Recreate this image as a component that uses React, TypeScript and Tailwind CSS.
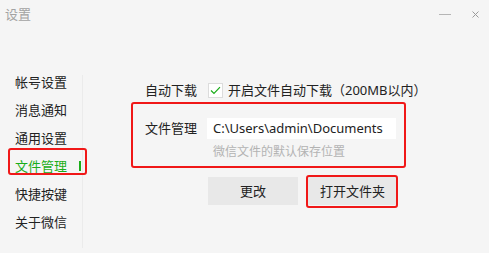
const FONT = { fontFamily: '"Noto Sans", "Noto Sans CJK SC", sans-serif' };

const MENU = ["帐号设置", "消息通知", "通用设置", "文件管理", "快捷按键", "关于微信"];
const ACTIVE = "文件管理";

function Sidebar() {
  return (
    <div className="w-[83px] shrink-0 mt-[47px] h-[173px] border-r border-[#ebebeb]">
      <ul className="-mt-[7px]">
        {MENU.map((m) => (
          <li
            key={m}
            className={
              "relative h-[28px] pl-[15px] flex items-center text-[13px] leading-none " +
              (m === ACTIVE ? "text-[#1aad19]" : "text-[#222]")
            }
          >
            {m}
            {m === ACTIVE ? (
              <span className="absolute right-[1px] top-[9px] w-[2px] h-[10px] bg-[#1aad19]" />
            ) : null}
          </li>
        ))}
      </ul>
    </div>
  );
}

function Checkbox() {
  return (
    <span className="w-[15px] h-[15px] border border-[#dcdcdc] bg-white flex items-center justify-center">
      <svg width="11" height="9" viewBox="0 0 11 9" fill="none">
        <path d="M1 4.5 L4 7.5 L10 1.2" stroke="#1aad19" strokeWidth="1.2" />
      </svg>
    </span>
  );
}

export default function App() {
  return (
    <div
      className="relative w-[489px] h-[253px] bg-[#f5f5f5] overflow-hidden text-[#222]"
      style={FONT}
    >
      {/* title bar */}
      <div className="h-[28px] flex items-center justify-between pl-[5px] pr-[10px]">
        <span className="text-[13px] leading-none text-[#a3a3a3]">设置</span>
        <div className="flex items-center gap-[21px]">
          <span className="w-[12px] h-[1px] bg-[#b5b5b5]" />
          <svg width="7" height="7" viewBox="0 0 7 7">
            <path d="M0.5 0.5 L6.5 6.5 M6.5 0.5 L0.5 6.5" stroke="#9a9a9a" strokeWidth="1" />
          </svg>
        </div>
      </div>

      <div className="flex">
        <Sidebar />

        <div className="pl-[62px] pt-[54px] flex flex-col">
          <div className="flex items-center h-[16px]">
            <span className="w-[62px] text-[13px] leading-none">自动下载</span>
            <div className="ml-[1px] flex items-center gap-[5px]">
              <Checkbox />
              <span className="text-[13px] leading-none">开启文件自动下载（200MB以内）</span>
            </div>
          </div>

          <div className="mt-[20px] flex items-center">
            <span className="w-[62px] text-[13px] leading-none">文件管理</span>
            <div className="w-[189px] h-[21px] bg-white pl-[6px] flex items-center text-[13px] leading-none">
              C:\Users\admin\Documents
            </div>
          </div>

          <div className="mt-[5px] ml-[68px] h-[16px] flex items-center text-[12px] leading-none text-[#b3b3b3]">
            微信文件的默认保存位置
          </div>

          <div className="mt-[17px] ml-[63px] flex gap-[10px]">
            <button className="w-[90px] h-[28px] bg-[#e8e8e8] text-[13px] leading-none text-[#222]">
              更改
            </button>
            <button className="w-[89px] h-[28px] bg-[#e8e8e8] text-[13px] leading-none text-[#222]">
              打开文件夹
            </button>
          </div>
        </div>
      </div>

      {/* annotation boxes */}
      <div className="absolute left-[8px] top-[148px] w-[79px] h-[27px] border-2 border-[#f01818] rounded-[3px]" />
      <div className="absolute left-[131px] top-[102px] w-[275px] h-[66px] border-2 border-[#f01818] rounded-[3px]" />
      <div className="absolute left-[306px] top-[175px] w-[92px] h-[33px] border-2 border-[#f01818] rounded-[3px]" />
    </div>
  );
}
